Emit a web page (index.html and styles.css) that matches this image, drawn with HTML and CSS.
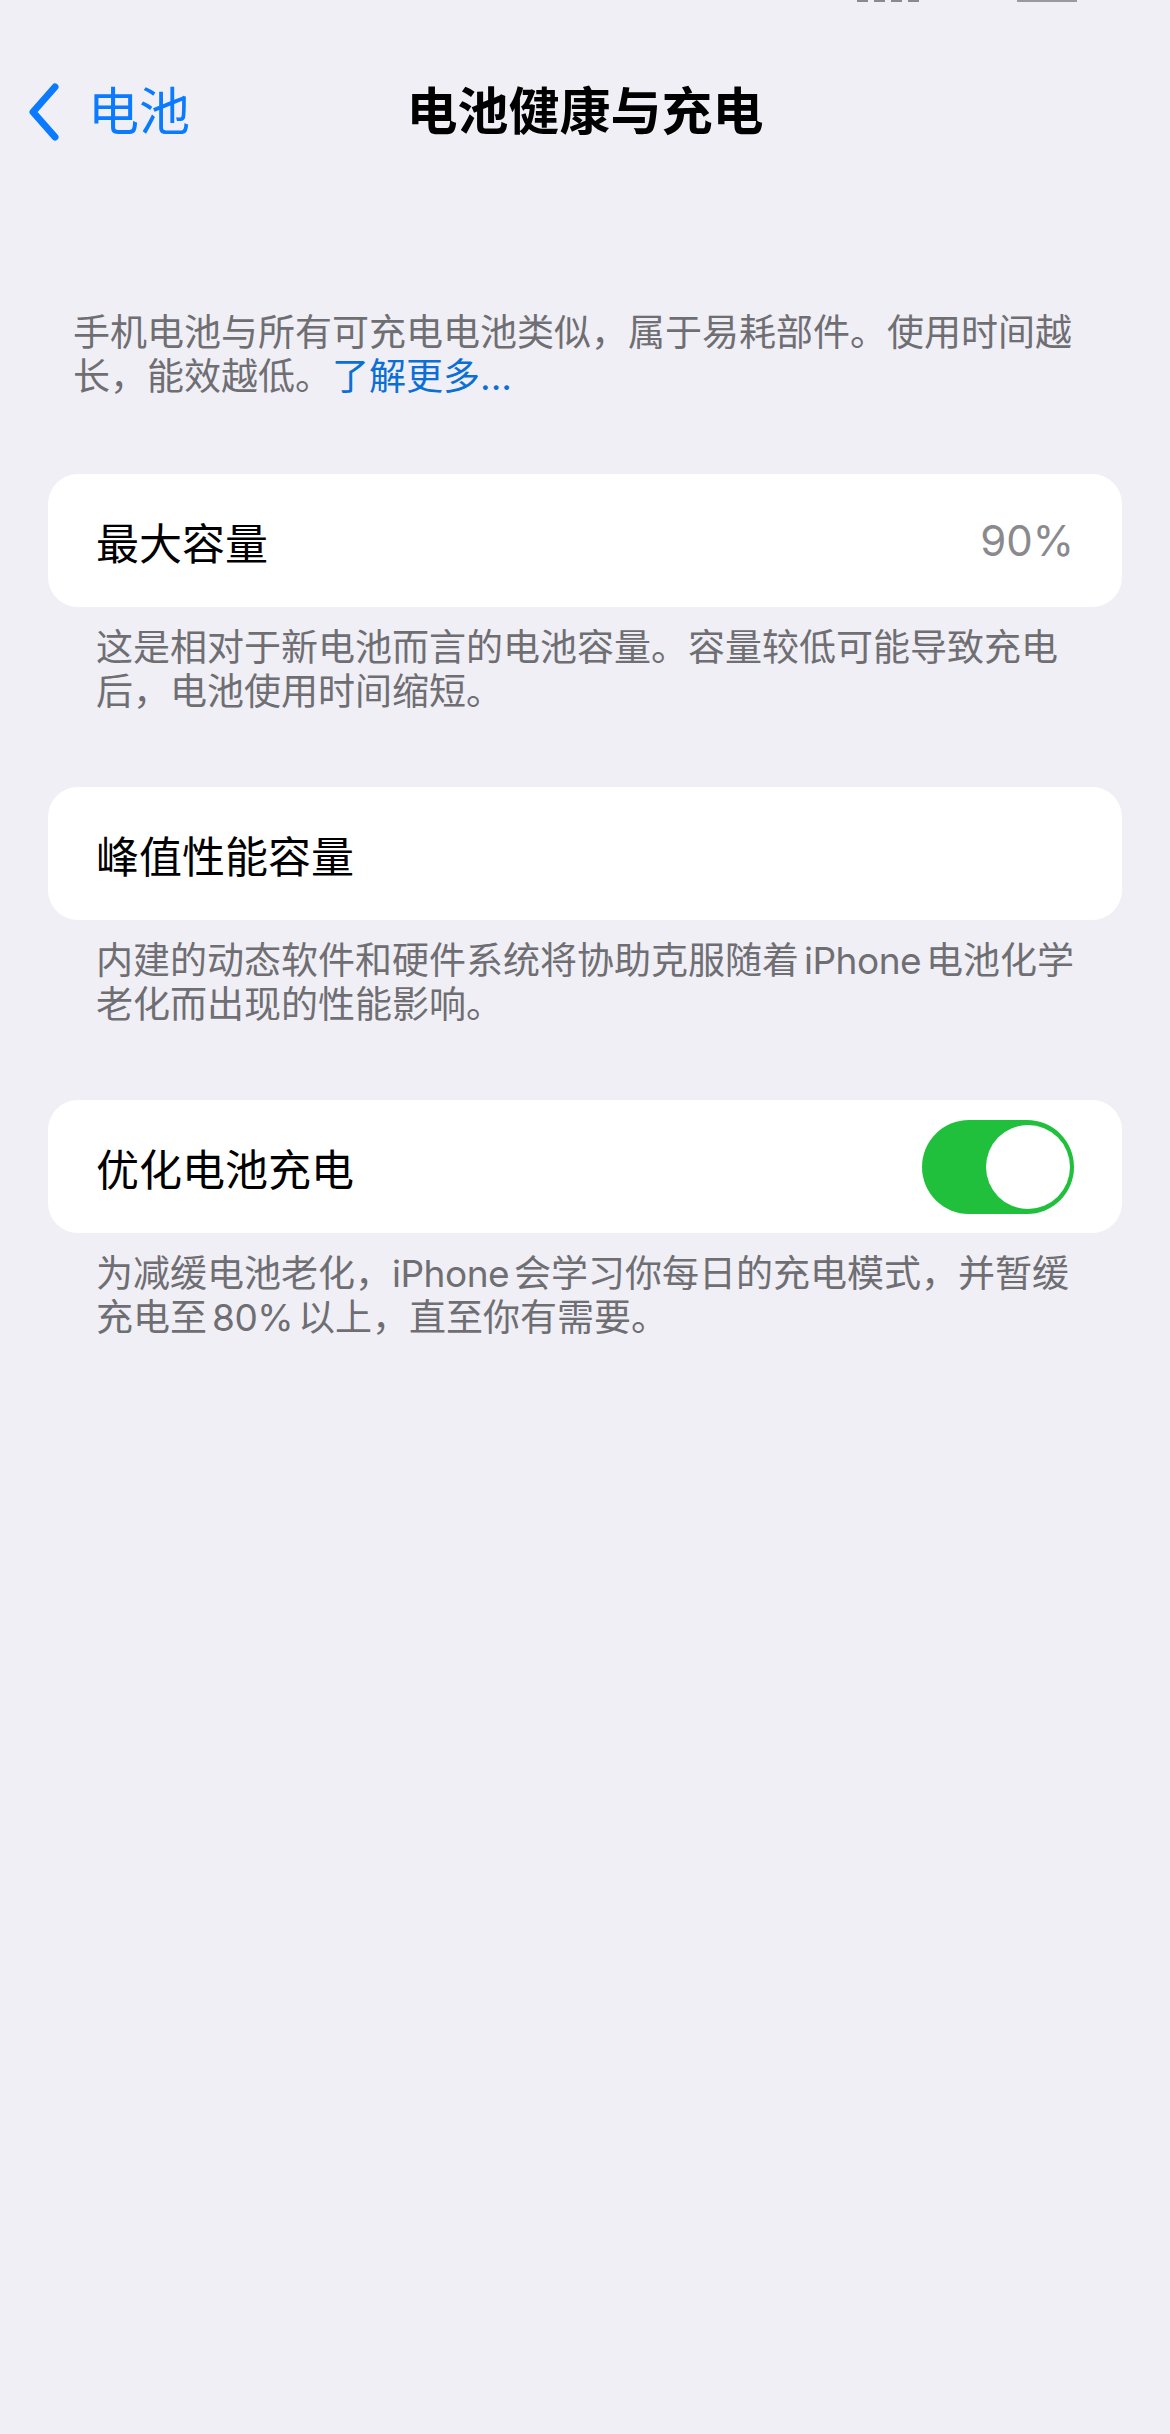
FILE: index.html
```html
<!DOCTYPE html>
<html lang="zh-CN">
  <head>
    <meta charset="utf-8">
    <title>电池健康与充电</title>
    <link rel="stylesheet" href="styles.css">
  </head>
  <body>
    <div class="status">
      <div class="signal">
        <span></span><span></span><span></span><span></span>
      </div>
      <div class="battery"></div>
    </div>

    <header class="nav">
      <a class="back" href="#">
        <svg width="36" height="60" viewBox="0 0 36 60">
          <path d="M29 5 L7 30 L29 55" fill="none" stroke="#0a7aff" stroke-width="7" stroke-linecap="round" stroke-linejoin="round"/>
        </svg>
        <span>电池</span>
      </a>
      <h1 class="title">电池健康与充电</h1>
      <div></div>
    </header>

    <p class="intro">
      手机电池与所有可充电电池类似，属于易耗部件。使用时间越<br>长，能效越低。<a href="#">了解更多...</a>
    </p>

    <section class="group">
      <div class="card">
        <span class="label">最大容量</span>
        <span class="value">90%</span>
      </div>
      <p class="footer">这是相对于新电池而言的电池容量。容量较低可能导致充电<br>后，电池使用时间缩短。</p>
    </section>

    <section class="group">
      <div class="card">
        <span class="label">峰值性能容量</span>
      </div>
      <p class="footer">内建的动态软件和硬件系统将协助克服随着<span class="latin">iPhone</span>电池化学<br>老化而出现的性能影响。</p>
    </section>

    <section class="group">
      <div class="card">
        <span class="label">优化电池充电</span>
        <label class="switch">
          <input type="checkbox" checked>
          <span class="knob"></span>
        </label>
      </div>
      <p class="footer">为减缓电池老化，<span class="latin after-punct">iPhone</span>会学习你每日的充电模式，并暂缓<br>充电至<span class="latin">80%</span>以上，直至你有需要。</p>
    </section>
  </body>
</html>
```

FILE: styles.css
```css
body {
  margin: 0;
  min-height: 2434px;
  background-color: #f0eff5;
  font-family: "Inter", "Noto Sans CJK SC", sans-serif;
  color: #000;
}

/* what is left of the status bar */
.status {
  height: 4px;
  display: flex;
  align-items: flex-start;
  padding-left: 857px;
}

.signal {
  display: flex;
  gap: 6px;
}

.signal span {
  width: 11px;
  height: 2px;
  background-color: #8a8a8e;
}

.battery {
  width: 60px;
  height: 2px;
  margin-left: 98px;
  background-color: #9a9a9e;
}

.nav {
  height: 216px;
  display: grid;
  grid-template-columns: 1fr auto 1fr;
  align-items: center;
}

.back {
  display: flex;
  align-items: center;
  gap: 26px;
  padding-left: 26px;
  color: #0a7aff;
  text-decoration: none;
  font-size: 51px;
  line-height: 60px;
}

.title {
  margin: 0;
  font-size: 51px;
  font-weight: 700;
  line-height: 60px;
}

.intro {
  margin: 91px 0 0 73px;
  font-size: 37px;
  line-height: 44px;
  color: #6e6e73;
}

.intro a {
  color: #0b6fd6;
  text-decoration: none;
}

.group {
  margin: 75px 48px 0 48px;
}

.card {
  height: 133px;
  display: flex;
  align-items: center;
  justify-content: space-between;
  padding: 0 48px;
  background-color: #fff;
  border-radius: 30px;
}

.label {
  font-size: 43px;
}

.value {
  font-size: 42px;
  color: #8a8a8e;
}

.footer {
  margin: 19px 0 0 48px;
  font-size: 37px;
  line-height: 44px;
  color: #6e6e73;
}

/* latin words sit a little apart from the chinese around them */
.latin {
  margin: 0 5px;
  letter-spacing: -0.5px;
}

.latin.after-punct {
  margin-left: 0;
}

.group + .group {
  margin-top: 73px;
}

.switch {
  position: relative;
  width: 152px;
  height: 94px;
  border-radius: 47px;
  background-color: #20c03c;
}

.switch input {
  display: none;
}

.knob {
  position: absolute;
  top: 5px;
  right: 4px;
  width: 84px;
  height: 84px;
  border-radius: 50%;
  background-color: #fff;
}
```
